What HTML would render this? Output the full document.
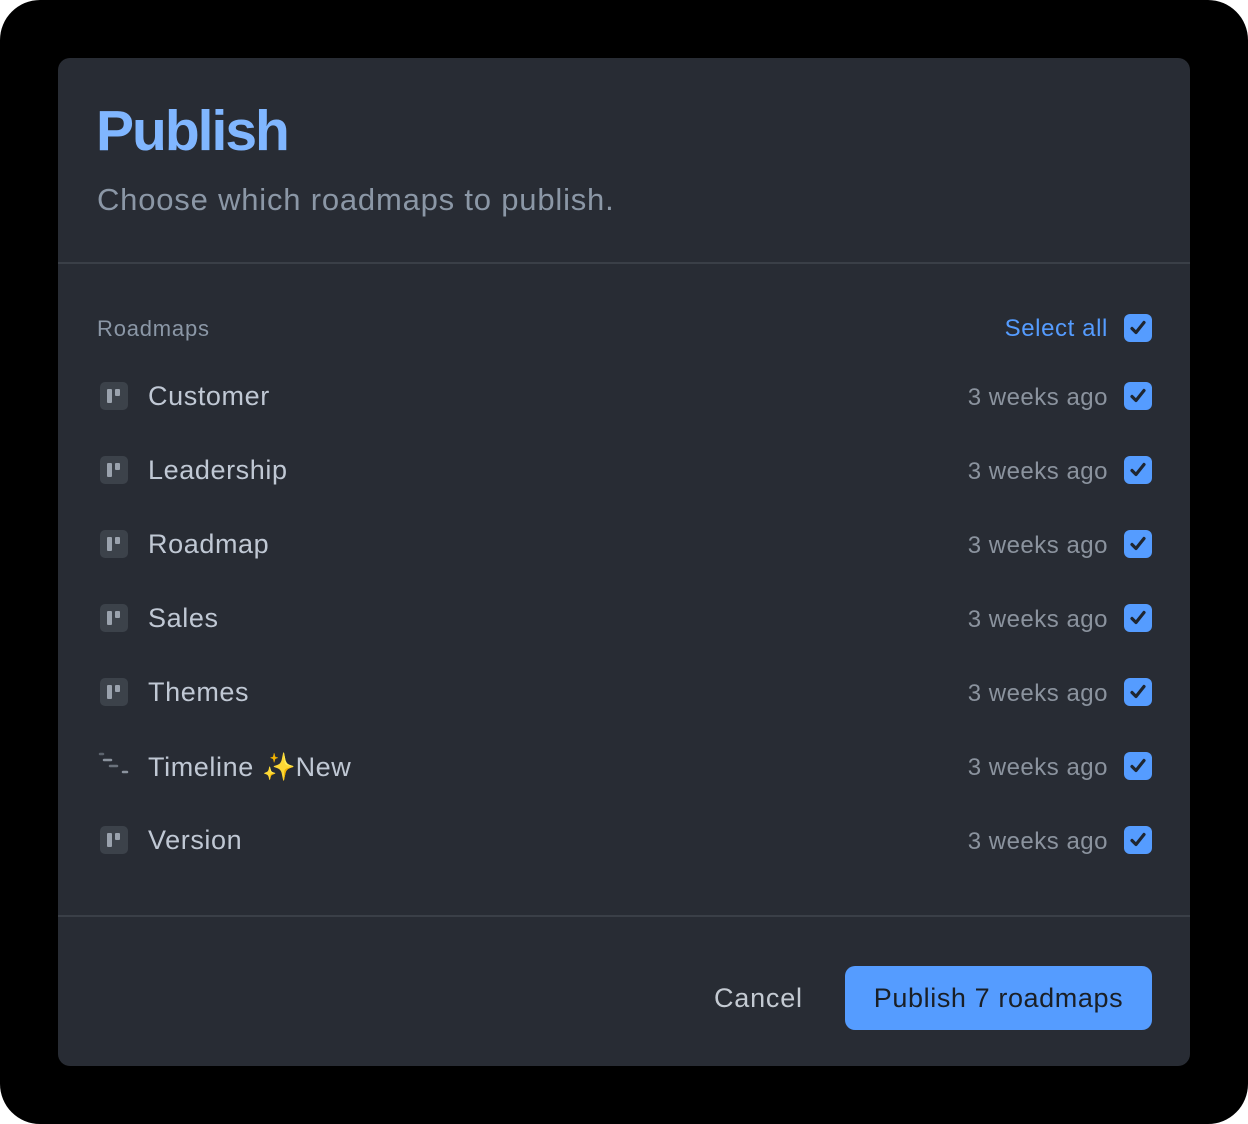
<!DOCTYPE html>
<html><head><style>
*{margin:0;padding:0;box-sizing:border-box}
body{width:1248px;height:1124px;background:#fff;font-family:"Liberation Sans",sans-serif;overflow:hidden}
.outer{position:absolute;left:0;top:0;width:1248px;height:1124px;background:#000;border-radius:40px}
.dlg{position:absolute;left:58px;top:58px;width:1132px;height:1008px;background:#282c34;border-radius:12px}
.title{position:absolute;left:38px;top:40px;font-size:57px;font-weight:bold;color:#80b6ff;letter-spacing:-2px}
.sub{position:absolute;left:39px;top:124px;font-size:31px;color:#8b97a6;letter-spacing:0.8px}
.hr{position:absolute;left:0;width:1132px;height:2px;background:#3a3f47}
.lbl{position:absolute;left:39px;top:258px;font-size:22px;color:#8b97a6;letter-spacing:0.8px}
.sel{position:absolute;right:82px;top:257px;font-size:24px;color:#559cff;letter-spacing:0.6px}
.cb{position:absolute;left:1066px;width:28px;height:28px;background:#559cff;border-radius:6px}
.cb svg{position:absolute;left:0;top:0}
.row{position:absolute;left:0;width:1132px;height:40px}
.ic{position:absolute;left:42px;top:6px;width:28px;height:28px;background:#3c424a;border-radius:5px}
.ic i{position:absolute;background:#9aa2ad;border-radius:1px}
.name{position:absolute;left:90px;top:5px;font-size:27px;color:#c0c8d4;letter-spacing:0.6px}
.when{position:absolute;right:82px;top:8px;font-size:24px;color:#8b939e;letter-spacing:0.5px}
.cancel{position:absolute;left:656px;top:925px;font-size:27px;color:#c4cad2;letter-spacing:0.8px}
.btn{position:absolute;left:787px;top:908px;width:307px;height:64px;background:#559cff;border-radius:10px;font-size:27px;color:#1a1f26;text-align:center;line-height:64px;letter-spacing:0.6px}
</style></head><body>
<div class="outer"></div>
<div class="dlg">
<div class="title">Publish</div>
<div class="sub">Choose which roadmaps to publish.</div>
<div class="hr" style="top:204px"></div>
<div class="lbl">Roadmaps</div>
<div class="sel">Select all</div>
<div class="cb" style="top:256px"><svg width="28" height="28"><path d="M8 14.5l4 4 8-10" stroke="#1f2630" stroke-width="3.2" fill="none" stroke-linecap="round" stroke-linejoin="round"/></svg></div>

<div class="row" style="top:318px"><div class="ic"><i style="left:7px;top:7px;width:5px;height:14px"></i><i style="left:15px;top:7px;width:5px;height:7px"></i></div><div class="name">Customer</div><div class="when">3 weeks ago</div><div class="cb" style="top:6px"><svg width="28" height="28"><path d="M8 14.5l4 4 8-10" stroke="#1f2630" stroke-width="3.2" fill="none" stroke-linecap="round" stroke-linejoin="round"/></svg></div></div>
<div class="row" style="top:392px"><div class="ic"><i style="left:7px;top:7px;width:5px;height:14px"></i><i style="left:15px;top:7px;width:5px;height:7px"></i></div><div class="name">Leadership</div><div class="when">3 weeks ago</div><div class="cb" style="top:6px"><svg width="28" height="28"><path d="M8 14.5l4 4 8-10" stroke="#1f2630" stroke-width="3.2" fill="none" stroke-linecap="round" stroke-linejoin="round"/></svg></div></div>
<div class="row" style="top:466px"><div class="ic"><i style="left:7px;top:7px;width:5px;height:14px"></i><i style="left:15px;top:7px;width:5px;height:7px"></i></div><div class="name">Roadmap</div><div class="when">3 weeks ago</div><div class="cb" style="top:6px"><svg width="28" height="28"><path d="M8 14.5l4 4 8-10" stroke="#1f2630" stroke-width="3.2" fill="none" stroke-linecap="round" stroke-linejoin="round"/></svg></div></div>
<div class="row" style="top:540px"><div class="ic"><i style="left:7px;top:7px;width:5px;height:14px"></i><i style="left:15px;top:7px;width:5px;height:7px"></i></div><div class="name">Sales</div><div class="when">3 weeks ago</div><div class="cb" style="top:6px"><svg width="28" height="28"><path d="M8 14.5l4 4 8-10" stroke="#1f2630" stroke-width="3.2" fill="none" stroke-linecap="round" stroke-linejoin="round"/></svg></div></div>
<div class="row" style="top:614px"><div class="ic"><i style="left:7px;top:7px;width:5px;height:14px"></i><i style="left:15px;top:7px;width:5px;height:7px"></i></div><div class="name">Themes</div><div class="when">3 weeks ago</div><div class="cb" style="top:6px"><svg width="28" height="28"><path d="M8 14.5l4 4 8-10" stroke="#1f2630" stroke-width="3.2" fill="none" stroke-linecap="round" stroke-linejoin="round"/></svg></div></div>
<div class="row" style="top:688px"><svg style="position:absolute;left:40px;top:6px" width="34" height="30"><g stroke="#8b939e" stroke-width="2.5" stroke-linecap="round"><line x1="2" y1="2" x2="5" y2="2" stroke="#5c636d"/><line x1="6" y1="8" x2="13" y2="8"/><line x1="12" y1="14" x2="19" y2="14" stroke="#6b727c"/><line x1="25" y1="20" x2="29" y2="20"/></g></svg><div class="name">Timeline <span style="color:#f5c518;letter-spacing:0">✨</span>New</div><div class="when">3 weeks ago</div><div class="cb" style="top:6px"><svg width="28" height="28"><path d="M8 14.5l4 4 8-10" stroke="#1f2630" stroke-width="3.2" fill="none" stroke-linecap="round" stroke-linejoin="round"/></svg></div></div>
<div class="row" style="top:762px"><div class="ic"><i style="left:7px;top:7px;width:5px;height:14px"></i><i style="left:15px;top:7px;width:5px;height:7px"></i></div><div class="name">Version</div><div class="when">3 weeks ago</div><div class="cb" style="top:6px"><svg width="28" height="28"><path d="M8 14.5l4 4 8-10" stroke="#1f2630" stroke-width="3.2" fill="none" stroke-linecap="round" stroke-linejoin="round"/></svg></div></div>

<div class="hr" style="top:857px"></div>
<div class="cancel">Cancel</div>
<div class="btn">Publish 7 roadmaps</div>
</div>
</body></html>
